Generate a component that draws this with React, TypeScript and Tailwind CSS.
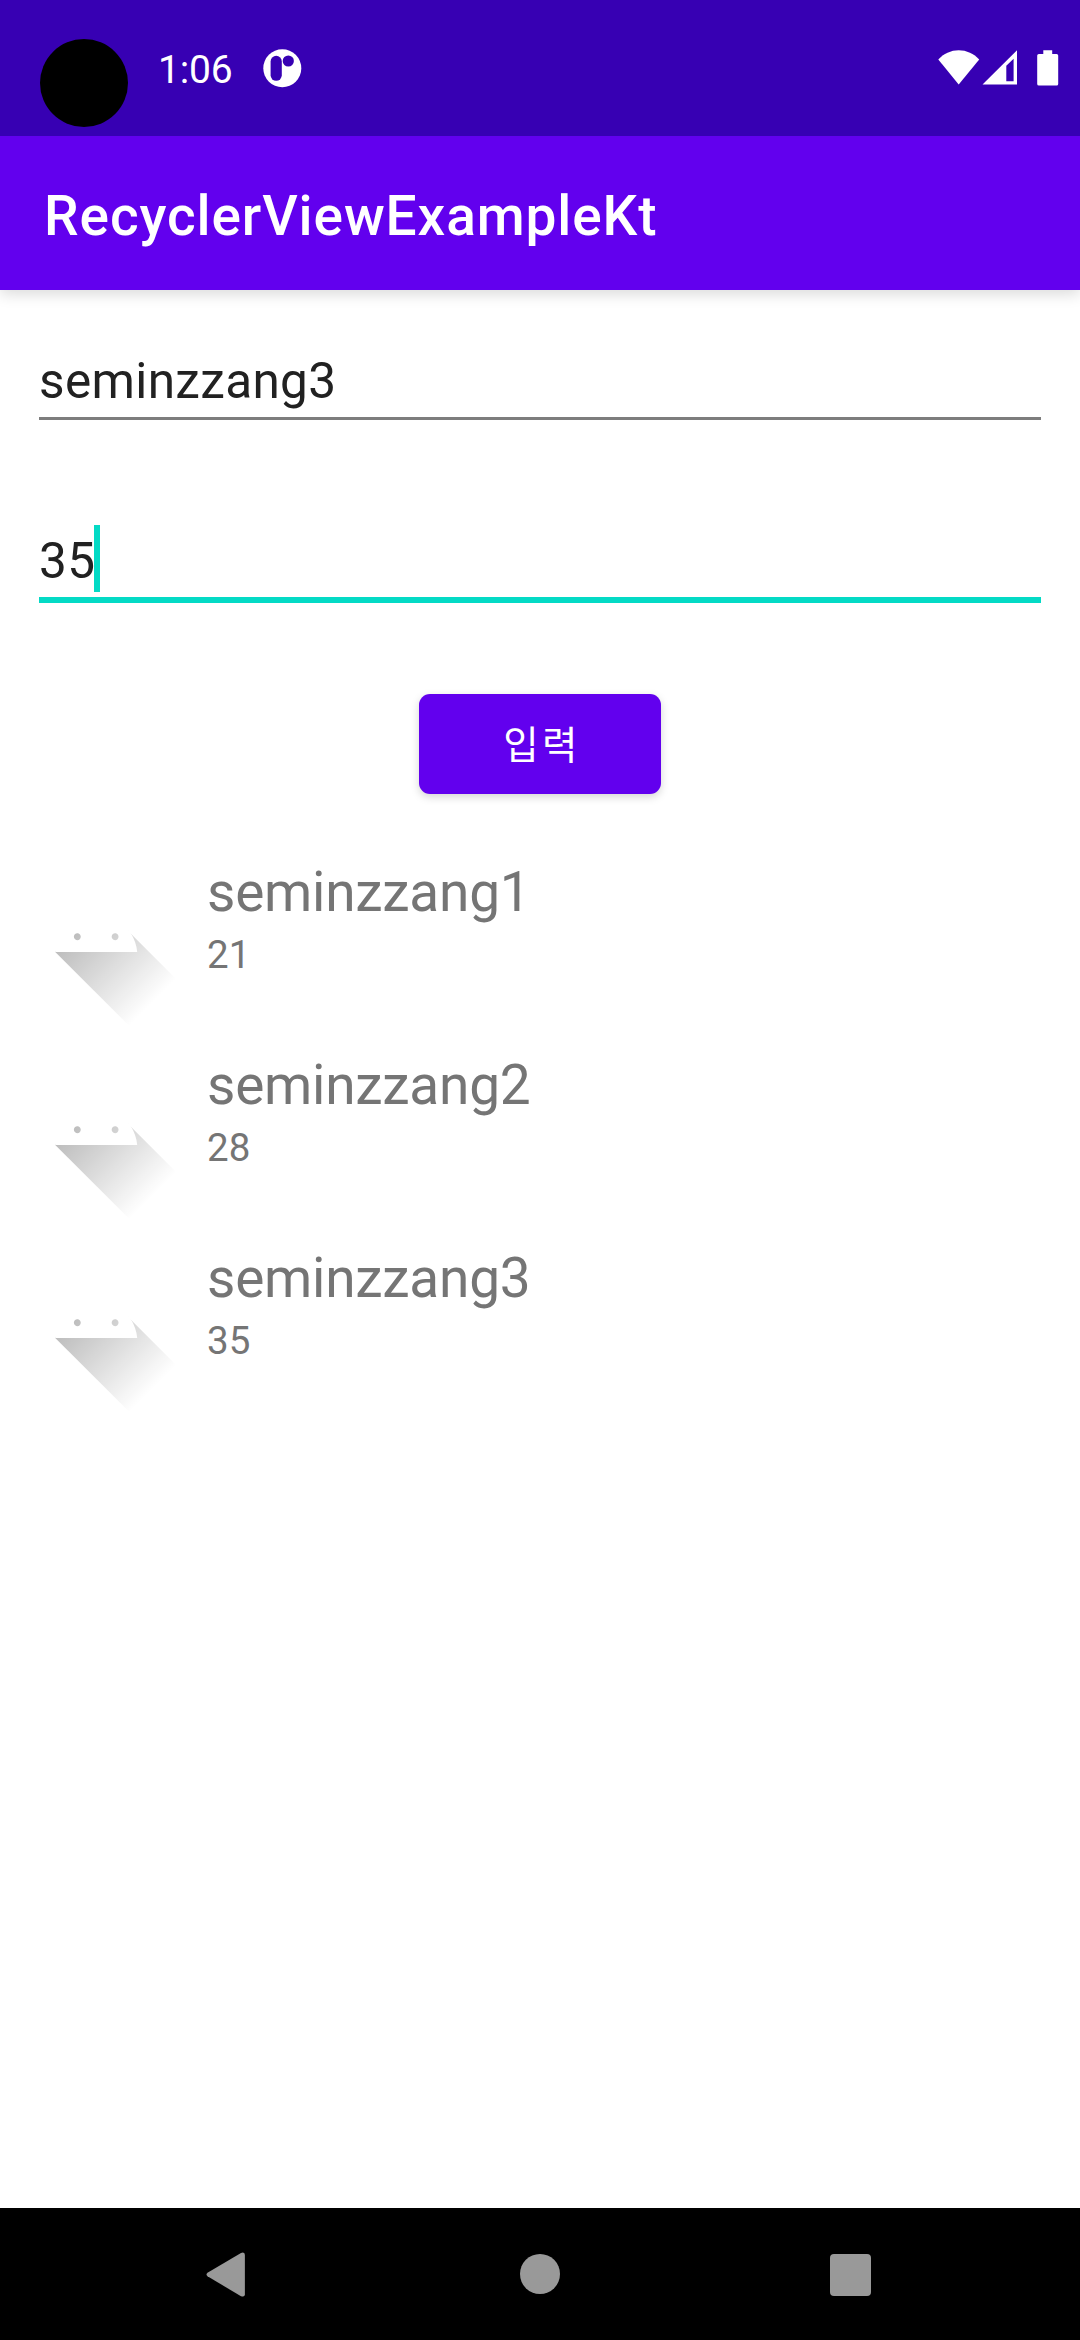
const people = [
  { name: "seminzzang1", age: 21 },
  { name: "seminzzang2", age: 28 },
  { name: "seminzzang3", age: 35 },
]

function StatusBar() {
  return (
    <header className="relative flex h-[136px] items-start bg-[#3700b3] text-white">
      <div className="mt-[39px] ml-10 size-[88px] rounded-full bg-black" />
      <span className="mt-[47px] ml-[30px] w-[78px] text-[39px] leading-[46px] tracking-[-0.2px]">1:06</span>
      <svg className="mt-[49px] ml-[27px]" width="39" height="39" viewBox="0 0 39 39">
        <circle cx="19.3" cy="19.3" r="19" fill="white" />
        <rect x="7.6" y="6.8" width="11.2" height="25" rx="5.6" fill="#3700b3" />
        <circle cx="25.3" cy="12" r="5.6" fill="#3700b3" />
      </svg>
      <svg className="mt-[50px] mr-[21px] ml-auto" width="121" height="36" viewBox="0 0 121 36">
        <path d="M0.3 9.5C5.5 3.7 13 0.3 20.7 0.3S36 3.7 41.2 9.5L20.7 34.5Z" fill="white" />
        <path
          fillRule="evenodd"
          d="M44.5 34.6L79 0.3V34.6ZM68.3 15.8V31.2H75.6V8.8Z"
          fill="white"
        />
        <path
          d="M105.3 0.3H114.2V4H118.6Q120.2 4 120.2 5.6V33.9Q120.2 35.6 118.6 35.6H100.9Q99.2 35.6 99.2 33.9V5.6Q99.2 4 100.9 4H105.3Z"
          fill="white"
        />
      </svg>
    </header>
  )
}

function LauncherIcon({ id }: { id: string }) {
  return (
    <svg className="size-[192.5px] shrink-0" viewBox="0 0 108 108">
      <defs>
        <linearGradient id={id} gradientUnits="userSpaceOnUse" x1="42.949" y1="49.598" x2="85.848" y2="92.496">
          <stop offset="0" stopColor="#000" stopOpacity="0.267" />
          <stop offset="1" stopColor="#000" stopOpacity="0" />
        </linearGradient>
      </defs>
      <path
        d="M31 63.928c0 0 6.4-11 12.1-13.1 7.2-2.6 26-1.4 26-1.4l38.1 38.1L107 108.928l-32-1L31 63.928z"
        fill={`url(#${id})`}
      />
      <path
        d="M65.3 45.828l3.8-6.6c.2-.4.1-.9-.3-1.1-.4-.2-.9-.1-1.1.3l-3.9 6.7c-6.3-2.8-13.4-2.8-19.7 0l-3.9-6.7c-.2-.4-.7-.5-1.1-.3-.3.2-.4.7-.2 1.1l3.8 6.6C36.2 49.428 31.7 56.028 31 63.928h46C76.3 56.028 71.8 49.428 65.3 45.828zM43.4 57.328c-.8 0-1.5-.5-1.8-1.2-.3-.7-.1-1.5.4-2.1.5-.5 1.4-.7 2.1-.4.7.3 1.2 1 1.2 1.8 0 1.1-.8 1.9-1.9 1.9zM64.6 57.328c-.8 0-1.5-.5-1.8-1.2s-.1-1.5.4-2.1c.5-.5 1.4-.7 2.1-.4.7.3 1.2 1 1.2 1.8 0 1.1-.9 1.9-1.9 1.9z"
        fill="white"
      />
    </svg>
  )
}

function NavBar() {
  return (
    <nav className="flex h-[132px] items-start bg-black text-[#999]">
      <svg className="mt-[44px] ml-[206px]" width="40" height="46" viewBox="0 0 40 46">
        <path d="M1.5 20.8L35 0.9Q38.9 -0.6 38.9 3V42.2Q38.9 45.6 35 44.2L1.5 24.3Q-0.6 22.6 1.5 20.8Z" fill="currentColor" />
      </svg>
      <div className="mt-[45.5px] ml-[274px] size-10 rounded-full bg-current" />
      <div className="mt-[46px] ml-[270px] h-[42px] w-[41px] rounded-[4px] bg-current" />
    </nav>
  )
}

export default function App() {
  return (
    <div className="flex h-[2340px] w-[1080px] flex-col overflow-hidden bg-white font-[Roboto,'Noto_Sans_CJK_KR',sans-serif]">
      <StatusBar />
      <div className="flex h-[154px] items-center bg-[#6200ee] pl-11 shadow-[0_4px_14px_rgba(0,0,0,0.15)]">
        <h1 className="pt-[6px] text-[55px] leading-[64px] font-medium tracking-[0.9px] text-white">
          RecyclerViewExampleKt
        </h1>
      </div>

      <main className="flex flex-1 flex-col">
        <div className="mx-[39px] mt-[51px] h-[79px] border-b-[3px] border-[#7d7d7d] text-[49.5px] leading-[80px] tracking-[0.35px] text-[#212121]">
          seminzzang3
        </div>
        <div className="mx-[39px] mt-[100px] flex h-[83px] border-b-[6px] border-[#03dac5] text-[49.5px] leading-[82px] tracking-[0.35px] text-[#212121]">
          <span className="w-[55px]">35</span>
          <span className="mt-[5px] h-[67px] w-[6px] bg-[#03dac5]" />
        </div>
        <button className="mt-[91px] h-[100px] w-[242px] self-center rounded-[11px] bg-[#6200ee] pt-[4px] pl-[4px] text-[38.5px] tracking-[3.4px] text-white shadow-[0_3px_8px_rgba(0,0,0,0.17)]">
          입력
        </button>

        <ul className="mt-[44px]">
          {people.map((person) => (
            <li key={person.name} className="flex h-[193px] text-[#757575]">
              <LauncherIcon id={`shadow-${person.name}`} />
              <div className="pt-[17px] pl-[14.5px]">
                <p className="text-[55px] leading-[74px] tracking-[-0.25px]">{person.name}</p>
                <p className="text-[38.5px] leading-[52px]">{person.age}</p>
              </div>
            </li>
          ))}
        </ul>
      </main>
      <NavBar />
    </div>
  )
}
